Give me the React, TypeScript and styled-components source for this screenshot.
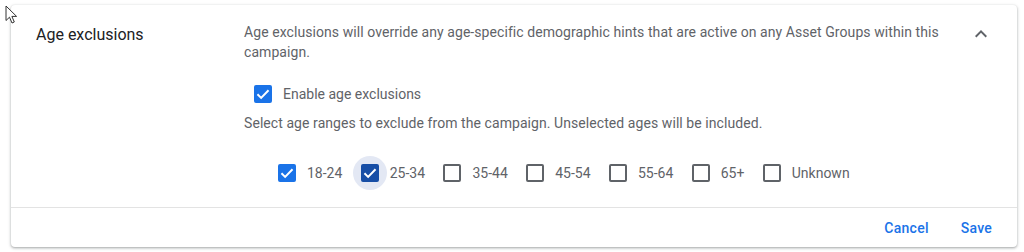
import React, { useState } from "react";
import styled, { createGlobalStyle } from "styled-components";

const GlobalStyle = createGlobalStyle`
  html, body { margin: 0; padding: 0; background: #ffffff; }
  body { font-family: Roboto, "Noto Sans", Arial, sans-serif; -webkit-font-smoothing: antialiased; }
  * { box-sizing: border-box; }
`;

const Page = styled.div`
  position: relative;
  width: 1024px;
  height: 252px;
  padding: 5px 7px 0 11px;
  overflow: hidden;
`;

const Cursor = styled.svg`
  position: absolute;
  left: 5px;
  top: 5px;
  width: 14px;
  height: 20px;
  pointer-events: none;
`;

const Card = styled.section`
  background: #fff;
  border-radius: 4px;
  box-shadow: 0 1px 2px 0 rgba(60, 64, 67, 0.3), 0 1px 3px 1px rgba(60, 64, 67, 0.15);
`;

const Body = styled.div`
  display: flex;
  align-items: flex-start;
  padding: 17px 24px 15px 25px;
  border-bottom: 1px solid #e3e3e3;
`;

const Title = styled.h2`
  margin: 1px 0 0 0;
  width: 208px;
  flex: none;
  font-size: 16px;
  line-height: 24px;
  font-weight: 400;
  color: #202124;
`;

const Content = styled.div`
  flex: 1;
  min-width: 0;
  padding-right: 20px;
`;

const Text = styled.p<{ $mt?: number }>`
  margin: ${(p) => p.$mt ?? 0}px 0 0 0;
  font-size: 14px;
  line-height: 20px;
  color: #5f6368;
  letter-spacing: 0.07px;
`;

const Toggle = styled.button`
  flex: none;
  width: 24px;
  height: 24px;
  padding: 0;
  border: 0;
  background: none;
  display: flex;
  align-items: center;
  justify-content: center;
  color: #5f6368;
  cursor: pointer;
`;

const OptionRow = styled.div<{ $mt: number; $indent: number }>`
  display: flex;
  align-items: center;
  margin-top: ${(p) => p.$mt}px;
  margin-left: ${(p) => p.$indent}px;
  gap: 7.4px;
`;

const Option = styled.label`
  display: flex;
  align-items: center;
  height: 38px;
  cursor: pointer;
`;

const BoxWrap = styled.span<{ $focused?: boolean }>`
  position: relative;
  width: 40px;
  height: 38px;
  display: flex;
  align-items: center;
  justify-content: center;
  flex: none;
  &::before {
    content: "";
    position: absolute;
    left: 3px;
    top: 2px;
    width: 34px;
    height: 34px;
    border-radius: 50%;
    background: ${(p) => (p.$focused ? "#e3e8f4" : "transparent")};
  }
`;

const Box = styled.span<{ $checked: boolean; $focused?: boolean }>`
  position: relative;
  width: 18px;
  height: 18px;
  border-radius: 2px;
  border: 2px solid
    ${(p) => (p.$checked ? (p.$focused ? "#174ea6" : "#1a73e8") : "#5f6368")};
  background: ${(p) => (p.$checked ? (p.$focused ? "#174ea6" : "#1a73e8") : "#fff")};
  display: flex;
  align-items: center;
  justify-content: center;
`;

const OptionLabel = styled.span`
  font-size: 14px;
  line-height: 20px;
  color: #5f6368;
`;

const Footer = styled.div`
  display: flex;
  justify-content: flex-end;
  align-items: center;
  gap: 16px;
  height: 39px;
  padding: 1px 17px 0 0;
`;

const TextButton = styled.button`
  height: 36px;
  padding: 0 8px;
  border: 0;
  background: none;
  font-family: Roboto, Arial, sans-serif;
  font-size: 14px;
  font-weight: 500;
  letter-spacing: 0.25px;
  color: #1a73e8;
  cursor: pointer;
`;

function Check() {
  return (
    <svg width="14" height="14" viewBox="0 0 24 24" fill="none">
      <path d="M2.5 12.5 L8.8 18.6 L21.5 5.6" stroke="#fff" strokeWidth="3.4" />
    </svg>
  );
}

function Checkbox({ checked, focused, label, onToggle }: { checked: boolean; focused?: boolean; label: string; onToggle: () => void }) {
  return (
    <Option onClick={onToggle}>
      <BoxWrap $focused={focused}>
        <Box $checked={checked} $focused={focused}>{checked && <Check />}</Box>
      </BoxWrap>
      <OptionLabel>{label}</OptionLabel>
    </Option>
  );
}

const AGES = ["18-24", "25-34", "35-44", "45-54", "55-64", "65+", "Unknown"];

export default function App() {
  const [enabled, setEnabled] = useState(true);
  const [sel, setSel] = useState<Record<string, boolean>>({ "18-24": true, "25-34": true });
  return (
    <>
      <GlobalStyle />
      <Page>
        <Card>
          <Body>
            <Title>Age exclusions</Title>
            <Content>
              <Text>
                Age exclusions will override any age-specific demographic hints that are active on any Asset Groups within this campaign.
              </Text>
              <OptionRow $mt={13} $indent={-1}>
                <Checkbox checked={enabled} label="Enable age exclusions" onToggle={() => setEnabled(!enabled)} />
              </OptionRow>
              <Text>Select age ranges to exclude from the campaign. Unselected ages will be included.</Text>
              <OptionRow $mt={21} $indent={23}>
                {AGES.map((a) => (
                  <Checkbox
                    key={a}
                    label={a}
                    checked={!!sel[a]}
                    focused={a === "25-34"}
                    onToggle={() => setSel({ ...sel, [a]: !sel[a] })}
                  />
                ))}
              </OptionRow>
            </Content>
            <Toggle aria-label="Collapse">
              <svg width="24" height="24" viewBox="0 0 24 24" fill="#5f6368">
                <path d="M12 8l-6 6 1.41 1.41L12 10.83l4.59 4.58L18 14z" />
              </svg>
            </Toggle>
          </Body>
          <Footer>
            <TextButton>Cancel</TextButton>
            <TextButton>Save</TextButton>
          </Footer>
        </Card>
        <Cursor viewBox="0 0 14 20">
          <path d="M1 1 L1 15.5 L4.5 12.2 L7 18 L9.3 17 L6.9 11.4 L11.6 11.4 Z" fill="#fff" stroke="#333" strokeWidth="1" strokeLinejoin="round" />
        </Cursor>
      </Page>
    </>
  );
}
